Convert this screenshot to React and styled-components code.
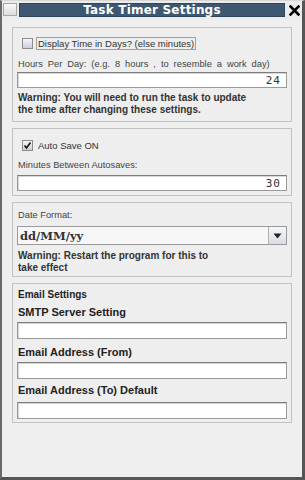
import React from "react";
import styled, { createGlobalStyle } from "styled-components";

const Global = createGlobalStyle`
  html, body { margin: 0; padding: 0; background: #eeeeee; }
  body { font-family: "Liberation Sans", Arial, sans-serif; }
  * { box-sizing: border-box; }
`;

const Window = styled.div`
  width: 305px;
  height: 480px;
  background: #efefef;
  border-left: 2px solid #6a6a6a;
  border-right: 3px solid #555;
  border-bottom: 3px solid #555;
  border-top: 1px solid #d8d8d8;
  display: flex;
  flex-direction: column;
`;

const TitleRow = styled.div`
  height: 19px;
  padding: 2px 0 0 1px;
  display: flex;
  align-items: flex-start;
  gap: 2px;
  background: #ececec;
`;

const MenuBox = styled.div`
  width: 14px;
  height: 13px;
  border: 1px solid #a8a8a8;
  background: linear-gradient(#fafafa, #dcdcdc);
`;

const TitleBar = styled.div`
  flex: 1;
  height: 14px;
  background: #3d5870;
  border: 1px solid #2e455a;
  color: #fff;
  font: bold 12px "DejaVu Sans", sans-serif;
  letter-spacing: 0.2px;
  display: flex;
  align-items: center;
  justify-content: center;
  line-height: 12px;
`;

const Close = styled.div`
  width: 15px;
  height: 14px;
  display: flex;
  align-items: center;
  justify-content: center;
`;

const Content = styled.div`
  flex: 1;
  padding: 7px 10px 0 10px;
  display: flex;
  flex-direction: column;
  gap: 6px;
`;

const Panel = styled.div`
  border: 1px solid #c2c2c2;
  padding: 0 4px ${(p) => p.$pb}px 4px;
  background: #eeeeee;
  display: flex;
  flex-direction: column;
`;

const CheckRow = styled.div`
  margin-top: ${(p) => p.$mt}px;
  height: 13px;
  display: flex;
  align-items: center;
  padding-left: 5px;
  gap: 3px;
`;

const Box = styled.div`
  width: 11px;
  height: 11px;
  border: 1px solid #8c8c8c;
  background: linear-gradient(#f4f6f8, #c9d0d8);
  display: flex;
  align-items: center;
  justify-content: center;
`;

const CheckLabel = styled.span`
  font-size: 9.5px;
  color: #333;
  padding: 0 1px;
  line-height: 11px;
  border: 1px solid ${(p) => (p.$focus ? "#a0a0a0" : "transparent")};
`;

const Label = styled.div`
  margin-top: ${(p) => p.$mt}px;
  font-size: 9.3px;
  word-spacing: ${(p) => p.$ws || 0}px;
  color: #444;
  line-height: 14px;
  padding-left: 1px;
  white-space: nowrap;
`;

const Heading = styled.div`
  margin-top: ${(p) => p.$mt}px;
  font: bold ${(p) => p.$size}px "Liberation Sans", Arial, sans-serif;
  color: #222;
  line-height: ${(p) => p.$lh}px;
  padding-left: 1px;
  white-space: nowrap;
`;

const Warning = styled.div`
  margin-top: ${(p) => p.$mt}px;
  font: bold 10px "Liberation Sans", Arial, sans-serif;
  color: #333;
  line-height: 12px;
  padding-left: 1px;
  white-space: nowrap;
`;

const Field = styled.div`
  margin-top: ${(p) => p.$mt}px;
  height: ${(p) => p.$h || 16}px;
  background: #fff;
  border: 1px solid #9a9a9a;
  border-top-color: #7d7d7d;
  box-shadow: inset 1px 1px 0 #d6d6d6;
  display: flex;
  align-items: center;
  justify-content: flex-end;
  padding-right: 5px;
  font: 11px "DejaVu Sans Mono", monospace;
  letter-spacing: 1px;
  color: #333;
`;

const Combo = styled.div`
  margin-top: ${(p) => p.$mt}px;
  height: 19px;
  border: 1px solid #9a9a9a;
  background: #f7f7f7;
  display: flex;
`;

const ComboText = styled.div`
  flex: 1;
  padding-left: 2px;
  display: flex;
  align-items: center;
  font: bold 11.5px "DejaVu Serif", serif;
  color: #333;
`;

const ComboButton = styled.div`
  width: 18px;
  border-left: 1px solid #b0b0b0;
  background: linear-gradient(#f6f7f9, #d9dee4);
  display: flex;
  align-items: center;
  justify-content: center;
`;

export default function App() {
  return (
    <>
      <Global />
      <Window>
        <TitleRow>
          <MenuBox />
          <TitleBar>Task Timer Settings</TitleBar>
          <Close>
            <svg width="11" height="11" viewBox="0 0 11 11">
              <path d="M1.5 1.5 L9.5 9.5 M9.5 1.5 L1.5 9.5" stroke="#000" strokeWidth="2.6" strokeLinecap="square" />
            </svg>
          </Close>
        </TitleRow>
        <Content>
          <Panel $pb={5}>
            <CheckRow $mt={9}>
              <Box />
              <CheckLabel $focus>Display Time in Days? (else minutes)</CheckLabel>
            </CheckRow>
            <Label $mt={7} $ws={2.4}>Hours Per Day: (e.g. 8 hours , to resemble a work day)</Label>
            <Field $mt={1}>24</Field>
            <Warning $mt={4}>
              Warning: You will need to run the task to update
              <br />
              the time after changing these settings.
            </Warning>
          </Panel>
          <Panel $pb={4}>
            <CheckRow $mt={10}>
              <Box>
                <svg width="9" height="9" viewBox="0 0 9 9">
                  <path d="M1.5 4.5 L3.5 7 L7.5 1.5" stroke="#111" strokeWidth="1.6" fill="none" />
                </svg>
              </Box>
              <CheckLabel>Auto Save ON</CheckLabel>
            </CheckRow>
            <Label $mt={6}>Minutes Between Autosaves:</Label>
            <Field $mt={3}>30</Field>
          </Panel>
          <Panel $pb={2}>
            <Label $mt={5}>Date Format:</Label>
            <Combo $mt={4}>
              <ComboText>dd/MM/yy</ComboText>
              <ComboButton>
                <svg width="9" height="6" viewBox="0 0 9 6">
                  <path d="M0.5 0.5 L8.5 0.5 L4.5 5.5 Z" fill="#222" />
                </svg>
              </ComboButton>
            </Combo>
            <Warning $mt={5}>
              Warning: Restart the program for this to
              <br />
              take effect
            </Warning>
          </Panel>
          <Panel $pb={3}>
            <Heading $mt={5} $size={10} $lh={12}>Email Settings</Heading>
            <Heading $mt={3} $size={11} $lh={16}>SMTP Server Setting</Heading>
            <Field $mt={2} $h={17} />
            <Heading $mt={5} $size={11} $lh={16}>Email Address (From)</Heading>
            <Field $mt={2} $h={17} />
            <Heading $mt={3} $size={11} $lh={16}>Email Address (To) Default</Heading>
            <Field $mt={4} $h={17} />
          </Panel>
        </Content>
      </Window>
    </>
  );
}
